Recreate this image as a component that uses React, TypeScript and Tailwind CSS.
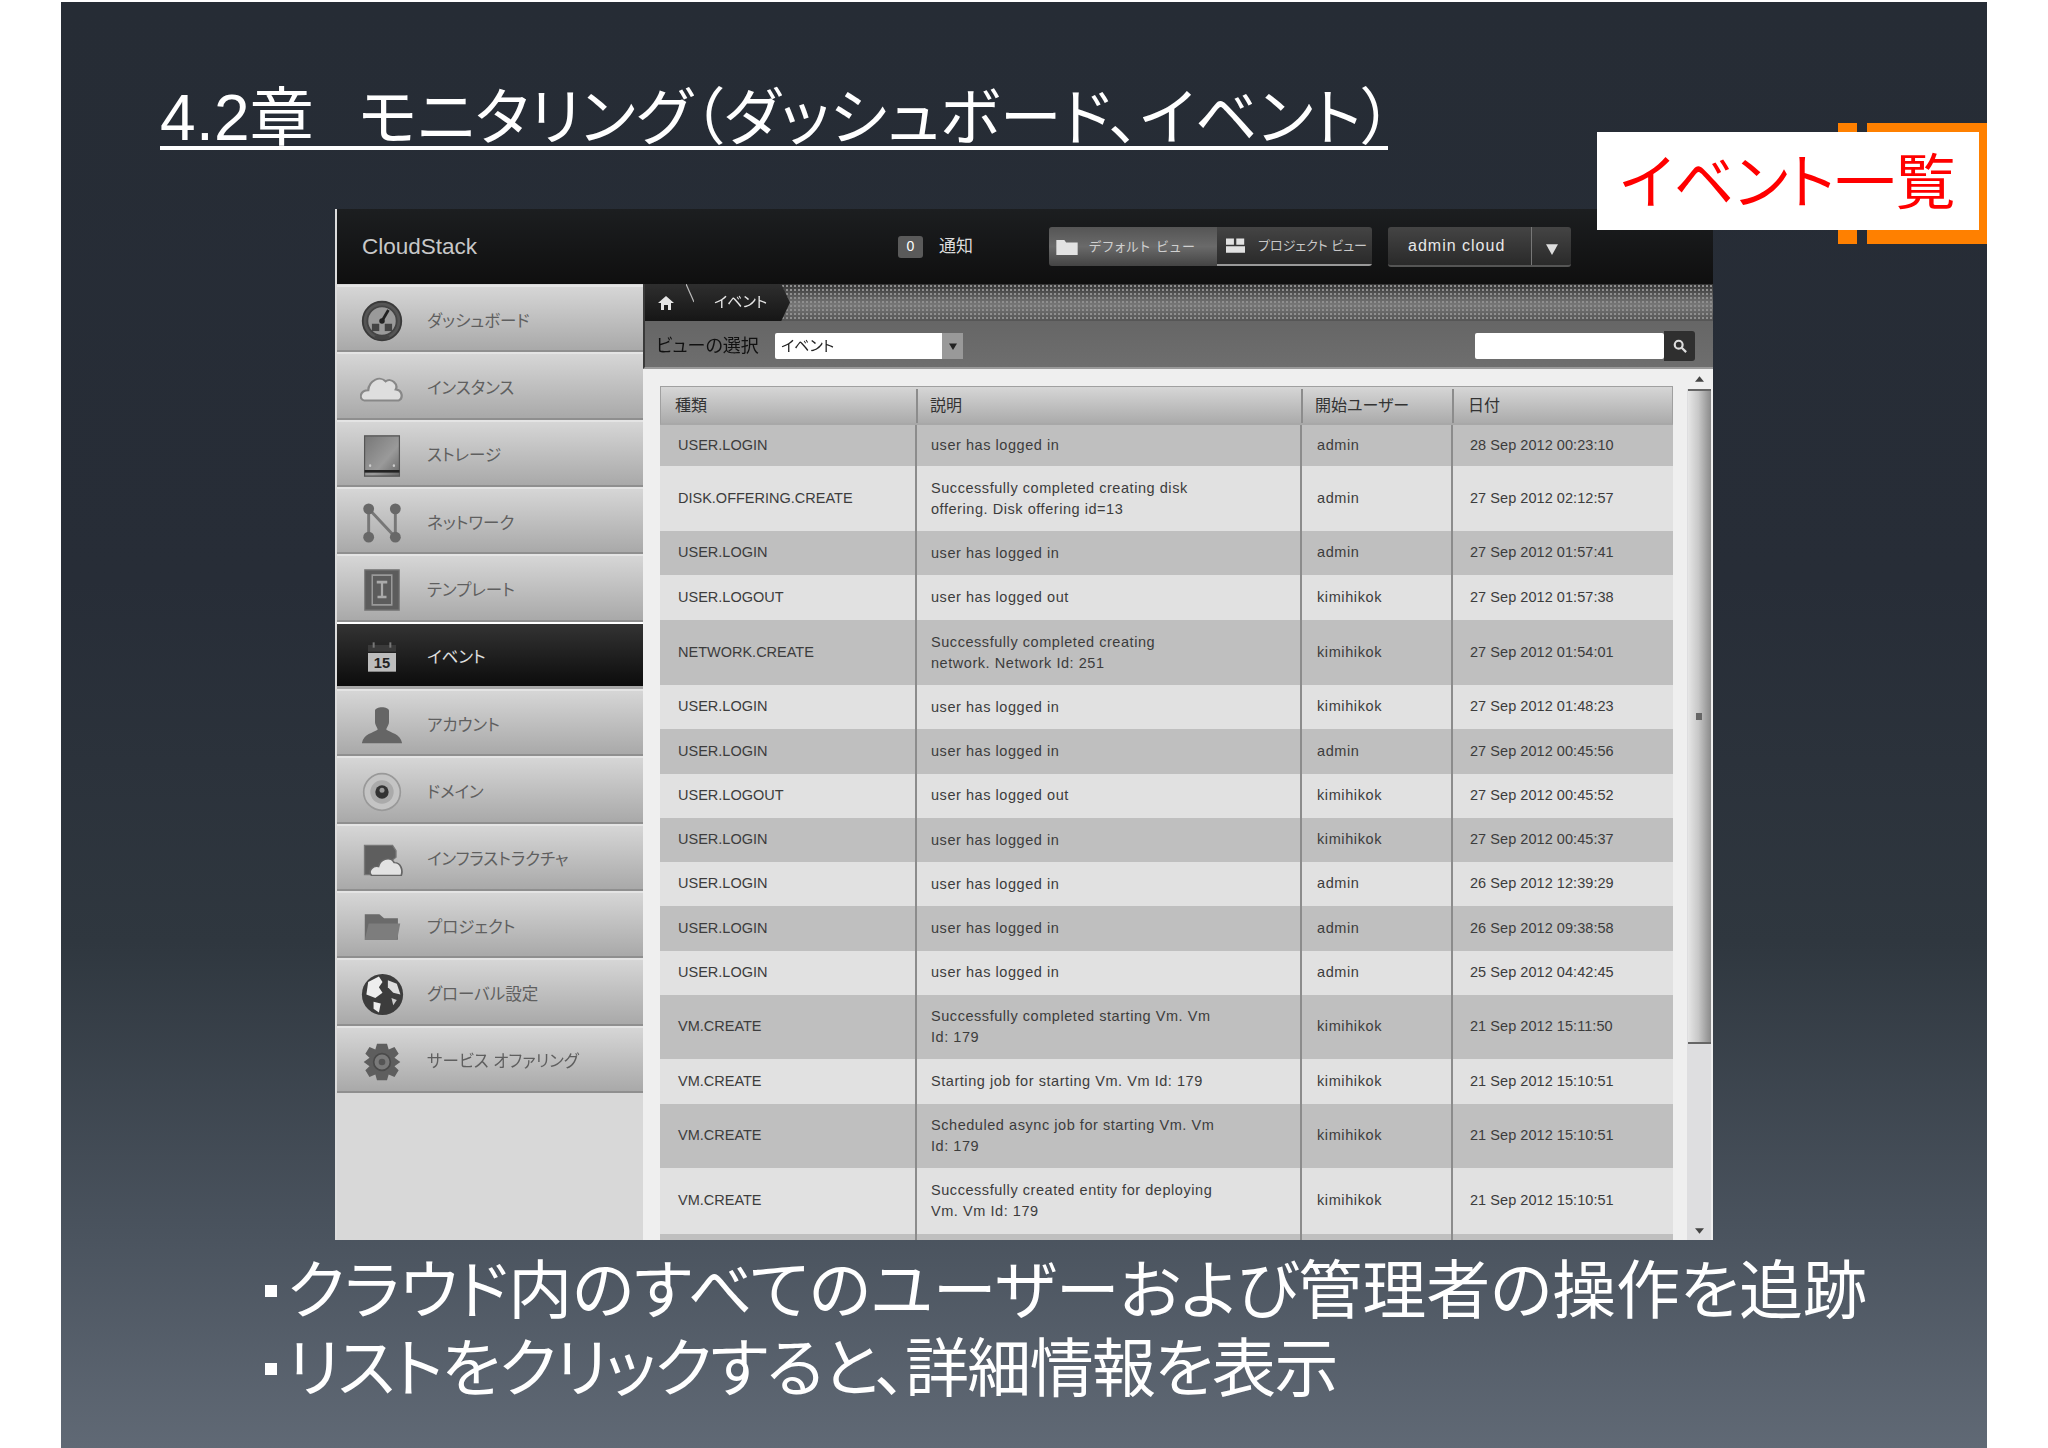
import React from "react";

const FONT = "[font-family:'Liberation_Sans','Noto_Sans_CJK_JP',sans-serif] [font-feature-settings:'palt']";

const Dash = () => (
  <svg viewBox="0 0 48 48" className="w-[44px] h-[44px]">
    <circle cx="24" cy="24" r="21" fill="#555" stroke="#3a3a3a" strokeWidth="2" />
    <circle cx="24" cy="24" r="16" fill="#9a9a9a" stroke="#444" strokeWidth="2" />
    <path d="M24 24 L31 12" stroke="#222" strokeWidth="3" />
    <rect x="13" y="27" width="8" height="8" fill="#444" />
    <rect x="27" y="27" width="8" height="8" fill="#444" />
    <circle cx="24" cy="24" r="3" fill="#222" />
    <rect x="16" y="40" width="16" height="4" fill="#444" />
  </svg>
);
const Cloud = () => (
  <svg viewBox="0 6 48 38" className="w-[44px] h-[28px]" preserveAspectRatio="none">
    <path d="M5 42 C-2 40 0 28 9 28 C10 14 22 8 28 16 C34 10 42 20 39 27 C47 28 47 40 42 42 Z" fill="#dedede" stroke="#888" strokeWidth="2.5" />
  </svg>
);
const Drive = () => (
  <svg viewBox="0 0 48 48" className="w-[38px] h-[42px]" preserveAspectRatio="none">
    <defs>
      <linearGradient id="dr" x1="0" y1="0" x2="1" y2="1">
        <stop offset="0" stopColor="#777" />
        <stop offset="0.6" stopColor="#9a9a9a" />
        <stop offset="1" stopColor="#666" />
      </linearGradient>
    </defs>
    <rect x="2" y="1" width="44" height="46" fill="url(#dr)" stroke="#555" strokeWidth="1.5" />
    <rect x="2" y="40" width="44" height="3" fill="#222" />
    <circle cx="9" cy="35" r="1.5" fill="#ccc" />
    <circle cx="39" cy="35" r="1.5" fill="#ccc" />
  </svg>
);
const Net = () => (
  <svg viewBox="0 0 48 48" className="w-[40px] h-[40px]">
    <path d="M8 7 V41 M8 7 L40 41 M40 7 V41" stroke="#777" strokeWidth="3.5" fill="none" />
    <circle cx="8" cy="7" r="6.5" fill="#686868" />
    <circle cx="40" cy="7" r="6.5" fill="#686868" />
    <circle cx="8" cy="41" r="6.5" fill="#686868" />
    <circle cx="40" cy="41" r="6.5" fill="#686868" />
  </svg>
);
const Tpl = () => (
  <svg viewBox="0 0 48 48" className="w-[36px] h-[42px]" preserveAspectRatio="none">
    <rect x="1" y="1" width="46" height="46" fill="#5c5c5c" stroke="#777" strokeWidth="1.5" />
    <rect x="11" y="7" width="26" height="34" fill="none" stroke="#999" strokeWidth="2" />
    <path d="M17 15 H31 M24 15 V32 M18 32 H30" stroke="#aaa" strokeWidth="3" />
  </svg>
);
const Cal = () => (
  <svg viewBox="0 0 48 48" className="w-[32px] h-[32px]" preserveAspectRatio="none">
    <rect x="3" y="6" width="42" height="10" fill="#3a3a3a" />
    <rect x="10" y="2" width="3" height="8" fill="#777" />
    <rect x="35" y="2" width="3" height="8" fill="#777" />
    <rect x="3" y="18" width="42" height="28" fill="#bdbdbd" />
    <text x="24" y="41" textAnchor="middle" fontSize="22" fontWeight="700" fill="#222" fontFamily="Liberation Sans">15</text>
  </svg>
);
const Person = () => (
  <svg viewBox="0 0 48 48" className="w-[42px] h-[38px]" preserveAspectRatio="none">
    <path d="M16 6 C16 0 32 0 32 6 V20 C32 25 29 27 29 30 C34 34 45 35 47 47 H1 C3 35 14 34 19 30 C19 27 16 25 16 20 Z" fill="#656565" />
  </svg>
);
const Disc = () => (
  <svg viewBox="0 0 48 48" className="w-[40px] h-[40px]">
    <circle cx="24" cy="24" r="22" fill="#c4c4c4" stroke="#999" strokeWidth="2" />
    <circle cx="24" cy="24" r="14" fill="#aaa" />
    <circle cx="24" cy="24" r="8" fill="#333" />
    <circle cx="24" cy="22" r="3" fill="#999" />
  </svg>
);
const Infra = () => (
  <svg viewBox="0 0 48 48" className="w-[42px] h-[32px]" preserveAspectRatio="none">
    <path d="M4 2 H36 L40 10 V20 L14 46 H4 Z" fill="#5e5e5e" stroke="#777" strokeWidth="1.5" />
    <path d="M12 47 C7 40 14 32 20 34 C22 22 34 18 38 28 C46 28 48 40 46 47 Z" fill="#e2e2e2" stroke="#666" strokeWidth="2" />
  </svg>
);
const Folder = () => (
  <svg viewBox="0 0 48 48" className="w-[37px] h-[28px]" preserveAspectRatio="none">
    <path d="M1 2 H20 L26 9 H44 V46 H1 Z" fill="#6a6a6a" />
    <path d="M6 18 H47 L43 46 H1 Z" fill="#7d7d7d" />
  </svg>
);
const Globe = () => (
  <svg viewBox="0 0 48 48" className="w-[43px] h-[43px]">
    <circle cx="24" cy="24" r="23" fill="#3c3c3c" />
    <path d="M8 10 L20 4 L24 10 L20 16 L24 22 L16 28 L6 24 Z" fill="#eee" />
    <path d="M30 8 L40 12 L44 24 L36 22 L30 16 Z" fill="#ddd" />
    <path d="M14 32 L22 34 L20 44 L14 40 Z" fill="#eee" />
    <path d="M34 28 L40 30 L36 36 Z" fill="#ccc" />
  </svg>
);
const Gear = () => (
  <svg viewBox="0 0 48 48" className="w-[40px] h-[40px]">
    <path d="M18 2 H30 L32 9 L39 6 L44 14 L39 19 L46 24 L39 29 L44 34 L39 42 L32 39 L30 46 H18 L16 39 L9 42 L4 34 L9 29 L2 24 L9 19 L4 14 L9 6 L16 9 Z" fill="#5e5e5e" />
    <circle cx="24" cy="24" r="10" fill="#7a7a7a" stroke="#4a4a4a" strokeWidth="2" />
    <circle cx="24" cy="24" r="4" fill="#555" />
  </svg>
);

const nav = [
  { label: "ダッシュボード", icon: <Dash /> },
  { label: "インスタンス", icon: <Cloud /> },
  { label: "ストレージ", icon: <Drive /> },
  { label: "ネットワーク", icon: <Net /> },
  { label: "テンプレート", icon: <Tpl /> },
  { label: "イベント", icon: <Cal />, active: true },
  { label: "アカウント", icon: <Person /> },
  { label: "ドメイン", icon: <Disc /> },
  { label: "インフラストラクチャ", icon: <Infra /> },
  { label: "プロジェクト", icon: <Folder /> },
  { label: "グローバル設定", icon: <Globe /> },
  { label: "サービス オファリング", icon: <Gear /> },
];

const rows = [
  { h: "h-[41px]", t: "USER.LOGIN", d: ["user has logged in"], u: "admin", w: "28 Sep 2012 00:23:10" },
  { h: "h-[65px]", t: "DISK.OFFERING.CREATE", d: ["Successfully completed creating disk", "offering. Disk offering id=13"], u: "admin", w: "27 Sep 2012 02:12:57" },
  { h: "h-[44px]", t: "USER.LOGIN", d: ["user has logged in"], u: "admin", w: "27 Sep 2012 01:57:41" },
  { h: "h-[45px]", t: "USER.LOGOUT", d: ["user has logged out"], u: "kimihikok", w: "27 Sep 2012 01:57:38" },
  { h: "h-[65px]", t: "NETWORK.CREATE", d: ["Successfully completed creating", "network. Network Id: 251"], u: "kimihikok", w: "27 Sep 2012 01:54:01" },
  { h: "h-[44.3px]", t: "USER.LOGIN", d: ["user has logged in"], u: "kimihikok", w: "27 Sep 2012 01:48:23" },
  { h: "h-[44.3px]", t: "USER.LOGIN", d: ["user has logged in"], u: "admin", w: "27 Sep 2012 00:45:56" },
  { h: "h-[44.3px]", t: "USER.LOGOUT", d: ["user has logged out"], u: "kimihikok", w: "27 Sep 2012 00:45:52" },
  { h: "h-[44.3px]", t: "USER.LOGIN", d: ["user has logged in"], u: "kimihikok", w: "27 Sep 2012 00:45:37" },
  { h: "h-[44.3px]", t: "USER.LOGIN", d: ["user has logged in"], u: "admin", w: "26 Sep 2012 12:39:29" },
  { h: "h-[44.3px]", t: "USER.LOGIN", d: ["user has logged in"], u: "admin", w: "26 Sep 2012 09:38:58" },
  { h: "h-[44.3px]", t: "USER.LOGIN", d: ["user has logged in"], u: "admin", w: "25 Sep 2012 04:42:45" },
  { h: "h-[64px]", t: "VM.CREATE", d: ["Successfully completed starting Vm. Vm", "Id: 179"], u: "kimihikok", w: "21 Sep 2012 15:11:50" },
  { h: "h-[45px]", t: "VM.CREATE", d: ["Starting job for starting Vm. Vm Id: 179"], u: "kimihikok", w: "21 Sep 2012 15:10:51" },
  { h: "h-[64px]", t: "VM.CREATE", d: ["Scheduled async job for starting Vm. Vm", "Id: 179"], u: "kimihikok", w: "21 Sep 2012 15:10:51" },
  { h: "h-[66px]", t: "VM.CREATE", d: ["Successfully created entity for deploying", "Vm. Vm Id: 179"], u: "kimihikok", w: "21 Sep 2012 15:10:51" },
  { h: "h-[20px]", t: "", d: [""], u: "", w: "" },
];

const colA = "w-[255px] shrink-0";
const colB = "w-[385px] shrink-0 border-l-2 border-[#8c8c8c]";
const colC = "w-[151px] shrink-0 border-l-2 border-[#8c8c8c]";
const colD = "flex-1 border-l-2 border-[#8c8c8c]";

export default function App() {
  return (
    <div className={`w-[2048px] h-[1448px] bg-white overflow-hidden pt-[2px] ${FONT}`}>
      <div className="relative ml-[61px] w-[1926px] h-[1446px] bg-[linear-gradient(to_bottom,#262c35_0%,#272d37_40%,#2f373f_65%,#4a535e_85%,#606975_100%)]">
        {/* title */}
        <div className="h-[207px] pl-[99px] pt-[89px]">
          <h1 className="inline-block w-[1228px] whitespace-nowrap text-white text-[62px] leading-[54px] border-b-[4px] border-white font-normal tracking-[0.3px]">
            <span className="text-[64px]">4.2章</span>
            <span className="ml-[44px]">モニタリング（ダッシュボード、イベント）</span>
          </h1>
        </div>

        {/* tag */}
        <div className="absolute left-[1777px] top-[121px] w-[149px] h-[121px] flex">
          <div className="w-[19px] bg-[#ff8000]" />
          <div className="w-[10px]" />
          <div className="flex-1 bg-[#ff8000]" />
        </div>
        <div className="absolute z-10 left-[1536px] top-[130px] w-[382px] h-[98px] bg-white flex items-center justify-center pt-[6px]">
          <span className="text-[#ff0000] text-[60px] leading-none whitespace-nowrap tracking-[0.4px]">イベント一覧</span>
        </div>

        {/* app screenshot */}
        <div className="ml-[274px] w-[1378px] h-[1031px] flex flex-col border-l-2 border-[#dcdcdc] overflow-hidden blur-[0.6px]">
          <div className="h-[75px] shrink-0 bg-[linear-gradient(to_bottom,#1c1e20,#0f0f0f)] flex items-center pl-[25px]">
            <span className="text-[#c8c8c8] text-[22.5px] w-[536px]">CloudStack</span>
            <span className="w-[25px] h-[22px] rounded-[3px] bg-[#5a5a5a] text-white text-[14px] flex items-center justify-center">0</span>
            <span className="ml-[16px] w-[110px] text-[#ddd] text-[17px]">通知</span>
            <div className="flex h-[39px] rounded-[3px] overflow-hidden">
              <div className="w-[168px] bg-[linear-gradient(to_bottom,#555,#6a6a6a,#444)] flex items-center pl-[7px] gap-[11px]">
                <svg viewBox="0 0 24 18" className="w-[22px] h-[16px]"><path d="M0 1 H9 L11 4 H24 V18 H0 Z" fill="#e2e2e2" /></svg>
                <span className="text-[#d0d0d0] text-[13px] whitespace-nowrap tracking-[1.4px]">デフォルト ビュー</span>
              </div>
              <div className="w-[155px] bg-[linear-gradient(to_bottom,#444,#2a2a2a)] border-b-2 border-[#999] flex items-center pl-[9px] gap-[13px]">
                <svg viewBox="0 0 24 18" className="w-[19px] h-[15px]"><path d="M0 0 H10 V8 H0 Z M13 0 H23 V8 H13 Z M0 10 H24 V18 H0 Z" fill="#e2e2e2" /></svg>
                <span className="text-[#c8c8c8] text-[13px] whitespace-nowrap">プロジェクト ビュー</span>
              </div>
            </div>
            <div className="ml-[16px] flex h-[40px] w-[183px] rounded-[3px] overflow-hidden bg-[linear-gradient(to_bottom,#444,#2a2a2a)] border-b-2 border-[#555]">
              <div className="w-[143px] flex items-center pl-[20px] text-[#e8e8e8] text-[16px] tracking-[1px]">admin cloud</div>
              <div className="flex-1 border-l border-[#777] flex items-center justify-center pt-[6px]">
                <svg viewBox="0 0 10 10" className="w-[12px] h-[12px]"><path d="M0 1 H10 L5 10 Z" fill="#ddd" /></svg>
              </div>
            </div>
          </div>

          <div className="flex-1 flex min-h-0">
            {/* sidebar */}
            <div className="w-[306px] shrink-0 bg-[#d8d8d8] flex flex-col pt-[1px]">
              {nav.map((n) => (
                <div
                  key={n.label}
                  className={
                    n.active
                      ? "h-[67.33px] flex items-center pt-[5px] border-t-2 border-white border-b-[3px] border-b-[#a8a8a8] bg-[linear-gradient(to_bottom,#333,#0c0c0c)]"
                      : "h-[67.33px] flex items-center pt-[5px] border-t-2 border-[#e4e4e4] border-b-2 border-b-[#8f8f8f] bg-[linear-gradient(to_bottom,#d6d6d6,#a9a9a9)]"
                  }
                >
                  <div className="w-[90px] flex justify-center shrink-0">{n.icon}</div>
                  <span className={n.active ? "text-[#e0e0e0] text-[16.5px] whitespace-nowrap" : "text-[#5f5f5f] text-[16.5px] whitespace-nowrap"}>{n.label}</span>
                </div>
              ))}
            </div>

            {/* main */}
            <div className="flex-1 min-w-0 flex flex-col">
              <div className="h-[37px] shrink-0 flex border-l-2 border-[#3a3a3a] bg-[radial-gradient(circle,#8f8f8f_1px,transparent_1.4px),linear-gradient(to_bottom,#333,#777_55%,#555)] bg-[length:4px_4px,100%_100%]">
                <div className="w-[145px] h-full bg-[linear-gradient(to_bottom,#2e2e2e,#161616)] [clip-path:polygon(0_0,94%_0,100%_50%,94%_100%,0_100%)] flex items-center">
                  <div className="w-[41px] h-full flex items-center justify-center">
                    <svg viewBox="0 0 16 16" className="w-[16px] h-[16px]"><path d="M8 1 L16 8 H13 V15 H10 V10 H6 V15 H3 V8 H0 Z" fill="#e6e6e6" /></svg>
                  </div>
                  <svg viewBox="0 0 8 37" className="w-[8px] h-[37px] shrink-0"><path d="M0 0 L8 18" stroke="#bbb" strokeWidth="1.2" fill="none" /></svg>
                  <span className="ml-[20px] text-[#e8e8e8] text-[15px] whitespace-nowrap">イベント</span>
                </div>
              </div>
              <div className="h-[48px] shrink-0 bg-[linear-gradient(to_bottom,#666,#6e6e6e)] border-l-2 border-b-2 border-l-[#3a3a3a] border-b-[#9a9a9a] flex items-center pl-[11px] pt-[4px]">
                <span className="text-[#111] text-[18px] w-[119px] whitespace-nowrap">ビューの選択</span>
                <div className="w-[188px] h-[26px] bg-white rounded-[2px] flex items-center pl-[6px] text-[#222] text-[15px]">
                  <span className="flex-1">イベント</span>
                  <span className="w-[21px] h-full bg-[#999] flex items-center justify-center">
                    <svg viewBox="0 0 10 10" className="w-[8px] h-[8px]"><path d="M0 2 H10 L5 10 Z" fill="#222" /></svg>
                  </span>
                </div>
                <div className="ml-[512px] w-[189px] h-[26px] bg-white rounded-[2px]" />
                <div className="w-[31px] h-[30px] bg-[#2f2f2f] rounded-r-[3px] flex items-center justify-center">
                  <svg viewBox="0 0 16 16" className="w-[14px] h-[14px]" fill="none" stroke="#ddd" strokeWidth="2.5"><circle cx="6.5" cy="6.5" r="4.5" /><path d="M10 10 L15 15" /></svg>
                </div>
              </div>

              <div className="flex-1 min-h-0 bg-[#efefef] flex overflow-hidden">
                {/* table */}
                <div className="ml-[17px] mt-[17px] w-[1013px] shrink-0 flex flex-col">
                  <div className="h-[39px] shrink-0 flex items-stretch border border-b-2 border-[#a0a0a0] border-b-[#a8a8a8] bg-[linear-gradient(to_bottom,#d6d6d6,#ababab)] text-[#333] text-[16px] pt-[2px]">
                    <div className={`${colA} flex items-center pl-[14px]`}>種類</div>
                    <div className={`${colB} flex items-center pl-[12px]`}>説明</div>
                    <div className={`${colC} flex items-center pl-[12px] whitespace-nowrap`}>開始ユーザー</div>
                    <div className={`${colD} flex items-center pl-[14px]`}>日付</div>
                  </div>
                  {rows.map((r, i) => (
                    <div
                      key={i}
                      className={`${r.h} shrink-0 flex items-stretch text-[#3c3c3c] text-[14.5px] ${i % 2 === 0 ? "bg-[#bfbfbf]" : "bg-[#e1e1e1]"}`}
                    >
                      <div className={`${colA} flex items-center pl-[18px] whitespace-nowrap`}>{r.t}</div>
                      <div className={`${colB} flex flex-col justify-center pl-[14px] leading-[21px] tracking-[0.55px] whitespace-nowrap`}>
                        {r.d.map((l, j) => (
                          <div key={j}>{l}</div>
                        ))}
                      </div>
                      <div className={`${colC} flex items-center pl-[15px] tracking-[0.6px]`}>{r.u}</div>
                      <div className={`${colD} flex items-center pl-[17px] whitespace-nowrap tracking-[0.05px]`}>{r.w}</div>
                    </div>
                  ))}
                </div>

                {/* scrollbar */}
                <div className="ml-[14px] w-[24px] shrink-0 bg-[#dedee0] flex flex-col items-center relative">
                  <div className="h-[20px] w-full bg-[#efefef] flex items-center justify-center">
                    <svg viewBox="0 0 10 6" className="w-[9px] h-[6px]"><path d="M5 0 L10 6 H0 Z" fill="#444" /></svg>
                  </div>
                  <div className="w-[23px] h-[655px] bg-[linear-gradient(to_right,#e6e6e6,#c8c8c8_45%,#8a8a8a)] border-b-2 border-t-2 border-[#666] flex items-center justify-center">
                    <div className="w-[6px] h-[7px] bg-[#666]" />
                  </div>
                  <div className="absolute bottom-[6px]">
                    <svg viewBox="0 0 10 6" className="w-[9px] h-[6px]"><path d="M5 6 L10 0 H0 Z" fill="#444" /></svg>
                  </div>
                </div>
              </div>
            </div>
          </div>
        </div>

        {/* bullets */}
        <div className="pl-[204px] pt-[12px] text-white text-[64px] leading-[78px] whitespace-nowrap">
          <div className="flex items-center">
            <span className="w-[12px] h-[12px] bg-white mr-[10px] shrink-0" />
            <span>クラウド内のすべてのユーザーおよび管理者の操作を追跡</span>
          </div>
          <div className="flex items-center">
            <span className="w-[12px] h-[12px] bg-white mr-[10px] shrink-0" />
            <span className="tracking-[-1.6px]">リストをクリックすると、詳細情報を表示</span>
          </div>
        </div>
      </div>
    </div>
  );
}
